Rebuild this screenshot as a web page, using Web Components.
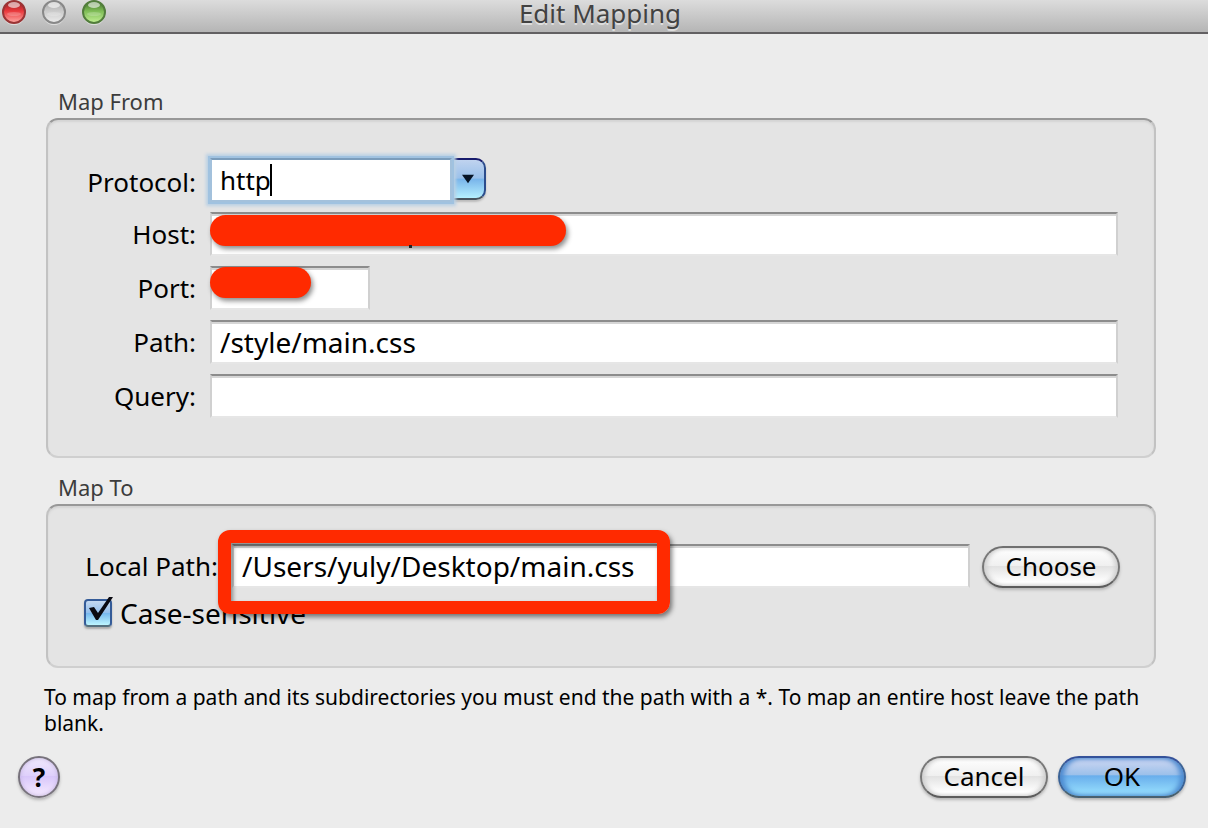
<!DOCTYPE html>
<html lang="en">
<head>
<meta charset="utf-8">
<meta name="viewport" content="width=device-width, initial-scale=1">
<title>Edit Mapping</title>
<style>
html { height: 100%; }
body { margin: 0; min-height: 100%; background: #ececec; color: #000; font: 26px/32px "Noto Sans", "Open Sans", sans-serif; }
</style>
</head>
<body>
<mapping-dialog></mapping-dialog>
<script>
const define = (name, html, setup) => {
  const template = document.createElement("template");
  template.innerHTML = "<style>*{box-sizing:border-box}</style>" + html;
  customElements.define(name, class extends HTMLElement {
    connectedCallback() {
      if (this.shadowRoot) return;
      const root = this.attachShadow({ mode: "open" });
      root.append(template.content.cloneNode(true));
      if (setup) setup(this, root);
    }
  });
};

define("window-bar", `
<style>
:host { display: grid; grid-template-columns: 120px 1fr 120px; box-sizing: border-box; height: 34px; padding: 0 8px 0 0; border-bottom: 2px solid #626062; background: linear-gradient(#dcdcdc, #b5b5b5); }
.lights { display: flex; gap: 16px; padding-left: 2px; }
svg { width: 24px; height: 26px; display: block; }
button { padding: 0; border: 0; background: none; width: 24px; height: 26px; }
h1 { margin: 0; font-size: 26px; line-height: 26px; font-weight: 400; text-align: center; color: #424242; text-shadow: 0 2px 0 #dedede; }
</style>
<div class="lights">
<button aria-label="Close"><svg viewBox="0 0 24 26"><defs><linearGradient id="r" x2="0" y2="1"><stop stop-color="#8c2226"/><stop offset=".45" stop-color="#e9373b"/><stop offset="1" stop-color="#ffaaa6"/></linearGradient></defs><circle cx="12" cy="13.5" r="11.5" fill="#ddd"/><circle cx="12" cy="12" r="11" fill="url(#r)" stroke="#9a3435" stroke-width="2"/><ellipse cx="12" cy="5" rx="6" ry="3" fill="#fff" opacity=".6"/><ellipse cx="12" cy="14" rx="7" ry="2" fill="#fff" opacity=".2"/></svg></button>
<button aria-label="Minimize"><svg viewBox="0 0 24 26"><defs><linearGradient id="g" x2="0" y2="1"><stop stop-color="#a6a6a6"/><stop offset=".45" stop-color="#cacaca"/><stop offset="1" stop-color="#ededed"/></linearGradient></defs><circle cx="12" cy="13.5" r="11.5" fill="#ddd"/><circle cx="12" cy="12" r="11" fill="url(#g)" stroke="#888" stroke-width="2"/><ellipse cx="12" cy="5" rx="6" ry="3" fill="#fff" opacity=".6"/><ellipse cx="12" cy="14" rx="7" ry="2" fill="#fff" opacity=".2"/></svg></button>
<button aria-label="Zoom"><svg viewBox="0 0 24 26"><defs><linearGradient id="v" x2="0" y2="1"><stop stop-color="#3c6a26"/><stop offset=".45" stop-color="#7dbb55"/><stop offset="1" stop-color="#c4f296"/></linearGradient></defs><circle cx="12" cy="13.5" r="11.5" fill="#ddd"/><circle cx="12" cy="12" r="11" fill="url(#v)" stroke="#527d3c" stroke-width="2"/><ellipse cx="12" cy="5" rx="6" ry="3" fill="#fff" opacity=".6"/><ellipse cx="12" cy="14" rx="7" ry="2" fill="#fff" opacity=".2"/></svg></button>
</div>
<h1><slot></slot></h1>`);

define("group-box", `
<style>
:host { display: block; }
h2 { margin: 0; padding: 0 12px 4px; font-size: 22px; line-height: 26px; font-weight: 400; color: #3c3c3c; }
section { padding: 38px 36px; border: 2px solid #c2c2c2; border-top-color: #989898; border-bottom-color: #cfcfcf; border-radius: 12px; background: #e4e4e4; box-shadow: inset 0 2px 2px #d4d4d4; display: grid; gap: 10px; }
</style>
<h2 id="t"></h2><section aria-labelledby="t"><slot></slot></section>`,
(host, root) => { root.querySelector("h2").textContent = host.getAttribute("heading"); });

const fieldCss = `
input { font: inherit; color: inherit; display: block; width: 100%; height: 44px; margin: 0; padding: 0 8px; border: 2px solid #d0d0d0; border-top-color: #8c8c8c; border-bottom-color: #e6e6e6; border-radius: 0; background: #fff; box-shadow: inset 0 2px 0 #d6d6d6; outline: 0; }`;

define("form-row", `
<style>
:host { display: grid; grid-template-columns: 112px 1fr; column-gap: 14px; }
:host([wide]) { grid-template-columns: 134px 1fr; }
label { text-align: right; line-height: 32px; padding-top: 6px; white-space: nowrap; }
.field { position: relative; }
:host([short]) .field { width: 160px; }
${fieldCss}
input { font-size: 28px; }
</style>
<label for="f"></label><div class="field"><input id="f" type="text"><slot></slot></div>`,
(host, root) => {
  root.querySelector("label").textContent = host.getAttribute("label");
  root.querySelector("input").value = host.getAttribute("value") || "";
});

define("combo-row", `
<style>
:host { display: grid; grid-template-columns: 112px 1fr; column-gap: 14px; }
label { text-align: right; line-height: 32px; padding-top: 8px; }
.combo { position: relative; display: flex; height: 44px; width: 276px; }
${fieldCss}
input { width: 242px; border-color: #a3c1dc; border-top-color: #7b9dbc; box-shadow: 0 0 0 2px #a0c2e0, 0 0 3px 4px #b9d0e4; position: relative; z-index: 1; }
button { width: 34px; height: 42px; padding: 0; border: 2px solid #2b4c8c; border-top-color: #171b6c; border-bottom-color: #48545e; border-left: 0; border-radius: 0 10px 10px 0; background: linear-gradient(#c0d3ef, #99c0ea 48%, #78b4ea 50%, #b5f0ff); box-shadow: 0 2px 2px #bbb; }
svg { display: block; margin: 0 auto; }
.caret { position: absolute; z-index: 2; left: 60px; top: 6px; width: 2px; height: 32px; background: #000; }
</style>
<label for="p">Protocol:</label>
<div class="combo"><input id="p" type="text" value="http"><button aria-label="Show protocols"><svg width="12" height="10" viewBox="0 0 14 10"><path d="M0 0H14L7 10Z" fill="#071426"/></svg></button><span class="caret"></span></div>`);

define("redact-bar", `
<style>
:host { position: absolute; left: 0; top: 3px; height: 31px; border-radius: 16px; background: #ff2a00; box-shadow: 2px 3px 5px rgba(0,0,0,.45); }
:host([size="long"]) { width: 356px; }
:host([size="short"]) { width: 101px; top: 1px; }
</style>`);

define("highlight-frame", `
<style>
:host { position: absolute; z-index: 3; left: -14px; top: -14px; width: 452px; height: 84px; border: 13px solid #ff2a00; border-radius: 12px; box-shadow: 2px 3px 5px rgba(0,0,0,.5), inset 2px 3px 4px rgba(0,0,0,.4); box-sizing: border-box; pointer-events: none; }
</style>`);

define("check-option", `
<style>
:host { display: block; font-size: 28px; }
label { display: flex; align-items: center; gap: 8px; height: 30px; }
.box { position: relative; width: 28px; height: 28px; flex: none; }
input { appearance: none; display: block; margin: 0; width: 28px; height: 28px; border: 2px solid #345b98; border-bottom-color: #55707e; border-radius: 4px; background: linear-gradient(#c4d8f0, #94c0ee 48%, #75b7ee 50%, #bdf6ff); box-shadow: 0 2px 2px #aaa; }
svg { position: absolute; left: 4px; top: -5px; pointer-events: none; }
</style>
<label><span class="box"><input type="checkbox" checked><svg width="26" height="28" viewBox="0 0 26 28"><path d="M1 14L6 13L10 19L21 3L25 3L10 26L8 26Z" fill="#0a0a12"/></svg></span><span><slot></slot></span></label>`);

define("aqua-button", `
<style>
:host { display: block; }
button { display: block; font: inherit; color: #000; width: 128px; height: 42px; padding: 0 0 2px; border: 2px solid #777; border-top-color: #707070; border-bottom-color: #5c5c5c; border-radius: 21px; background: linear-gradient(#fff, #f0f0f0 46%, #e2e2e2 48%, #fff 90%); box-shadow: 0 2px 3px #b5b5b5, inset 3px 0 4px #d0d0d0, inset -3px 0 4px #d0d0d0; }
:host([size="large"]) button { width: 138px; }
:host([primary]) button { border-color: #34529a #3c6396 #48606f; background: linear-gradient(#d0d8f2, #9cc0ea 44%, #69aeec 47%, #9ce4ff); box-shadow: 0 2px 3px #b0b0b0, inset 4px 0 5px #4e8bd0, inset -4px 0 5px #4e8bd0; }
:host([round]) button { width: 42px; padding: 0; font-weight: 700; border-color: #77727c; background: linear-gradient(#f0eafc, #dfd0fb 46%, #d8c6fa 48%, #f7ecff); box-shadow: 0 2px 3px #b5b5b5, inset 0 0 4px #c0b0de; }
</style>
<button type="button"><slot></slot></button>`);

define("mapping-dialog", `
<style>
:host { display: block; }
main { padding: 54px 52px 0 46px; display: grid; gap: 16px; }
.local { display: grid; grid-template-columns: 1fr auto; column-gap: 12px; margin: 0 -2px 0 0; }
.local aqua-button { padding-top: 2px; }
p { margin: 0; padding: 16px 20px 0 44px; font-size: 21px; line-height: 26px; }
footer { display: flex; gap: 10px; padding: 20px 22px 30px 18px; }
.help { margin-right: auto; }
.tail { position: absolute; left: 199px; top: 33px; width: 3px; height: 3px; background: #222; }
</style>
<window-bar>Edit Mapping</window-bar>
<main>
<group-box heading="Map From">
<combo-row></combo-row>
<form-row label="Host:"><redact-bar size="long"></redact-bar><span class="tail"></span></form-row>
<form-row label="Port:" short><redact-bar size="short"></redact-bar></form-row>
<form-row label="Path:" value="/style/main.css"></form-row>
<form-row label="Query:"></form-row>
</group-box>
<group-box heading="Map To">
<div class="local"><form-row wide label="Local Path:" value="/Users/yuly/Desktop/main.css"><highlight-frame></highlight-frame></form-row><aqua-button size="large">Choose</aqua-button></div>
<check-option>Case-sensitive</check-option>
</group-box>
</main>
<p>To map from a path and its subdirectories you must end the path with a *. To map an entire host leave the path blank.</p>
<footer><aqua-button class="help" round>?</aqua-button><aqua-button>Cancel</aqua-button><aqua-button primary>OK</aqua-button></footer>`);
</script>
</body>
</html>
